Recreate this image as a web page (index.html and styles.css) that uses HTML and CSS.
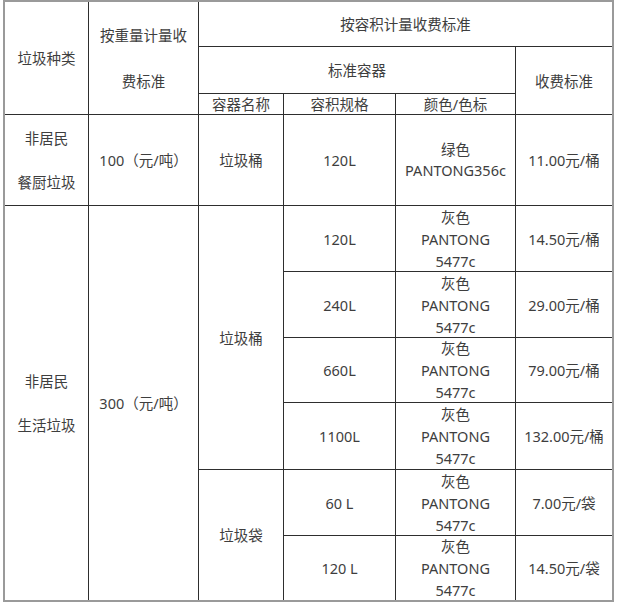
FILE: index.html
```html
<!DOCTYPE html>
<html lang="zh-CN">
<head>
<meta charset="utf-8">
<title>收费标准</title>
<link rel="stylesheet" href="styles.css">
</head>
<body>
<div class="sheet">
  <div class="cell r3 l46">垃圾种类</div>
  <div class="cell r3 l46">按重量计量收<br>费标准</div>
  <div class="cell c4">按容积计量收费标准</div>
  <div class="cell c3">标准容器</div>
  <div class="cell r2">收费标准</div>
  <div class="cell">容器名称</div>
  <div class="cell">容积规格</div>
  <div class="cell">颜色/色标</div>

  <div class="cell l44">非居民<br>餐厨垃圾</div>
  <div class="cell">100（元/吨）</div>
  <div class="cell">垃圾桶</div>
  <div class="cell">120L</div>
  <div class="cell l21">绿色<br>PANTONG356c</div>
  <div class="cell">11.00元/桶</div>

  <div class="cell r6 l44">非居民<br>生活垃圾</div>
  <div class="cell r6">300（元/吨）</div>
  <div class="cell r4">垃圾桶</div>
  <div class="cell">120L</div>
  <div class="cell l22">灰色<br>PANTONG<br>5477c</div>
  <div class="cell">14.50元/桶</div>

  <div class="cell">240L</div>
  <div class="cell l22">灰色<br>PANTONG<br>5477c</div>
  <div class="cell">29.00元/桶</div>

  <div class="cell">660L</div>
  <div class="cell l22">灰色<br>PANTONG<br>5477c</div>
  <div class="cell">79.00元/桶</div>

  <div class="cell">1100L</div>
  <div class="cell l22">灰色<br>PANTONG<br>5477c</div>
  <div class="cell">132.00元/桶</div>

  <div class="cell r2">垃圾袋</div>
  <div class="cell">60 L</div>
  <div class="cell l22">灰色<br>PANTONG<br>5477c</div>
  <div class="cell">7.00元/袋</div>

  <div class="cell">120 L</div>
  <div class="cell l22">灰色<br>PANTONG<br>5477c</div>
  <div class="cell">14.50元/袋</div>
</div>
</body>
</html>
```

FILE: styles.css
```css
html, body {
  margin: 0;
  padding: 0;
  background: #ffffff;
}

body {
  padding: 0 0 0 3px;
}

.sheet {
  width: 607px;
  display: grid;
  grid-template-columns: 83px 109px 84px 111px 119px 96px;
  grid-template-rows: 44px 46px 20px 90px 65px 65px 64px 66px 65px 64px;
  gap: 1px;
  background: #2e2e2e;
  border: 2px solid #9a9a9a;
  font-family: "Noto Sans", "Noto Sans CJK SC", sans-serif;
  font-size: 14.5px;
  color: #3e3e3e;
}

.cell {
  background: #ffffff;
  display: flex;
  align-items: center;
  justify-content: center;
  text-align: center;
  line-height: 20px;
  white-space: nowrap;
}

.r2 { grid-row: span 2; }
.r3 { grid-row: span 3; }
.r4 { grid-row: span 4; }
.r6 { grid-row: span 6; }
.c3 { grid-column: span 3; }
.c4 { grid-column: span 4; }

.l46 { line-height: 46px; }
.l44 { line-height: 44px; }
.l22 { line-height: 22px; }
.l21 { line-height: 21px; }
```
